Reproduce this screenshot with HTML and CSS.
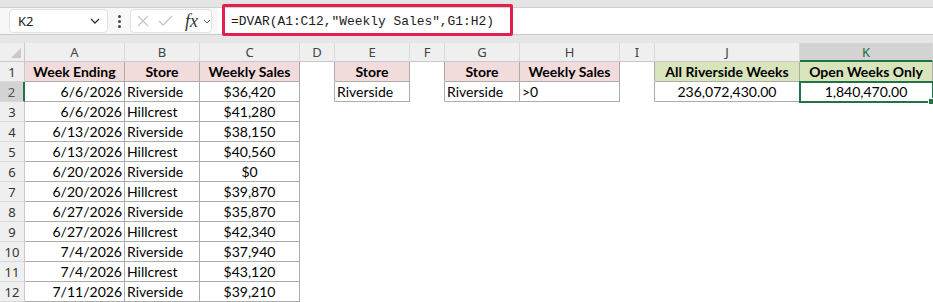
FILE: index.html
```html
<!DOCTYPE html>
<html>
<head>
  <meta charset="UTF-8">
  <title>DVAR</title>
  <link rel="stylesheet" href="styles.css">
</head>
<body>
  <div class="ribbon-edge"></div>
  <div class="toolbar">
    <div class="namebox">
      <span>K2</span>
      <svg class="chev" width="10" height="6" viewBox="0 0 10 6"><polyline points="1,1 5,5 9,1" fill="none" stroke="#333" stroke-width="1.3"/></svg>
    </div>
    <div class="dots"><i></i><i></i><i></i></div>
    <div class="fxbox">
      <svg width="12" height="12" viewBox="0 0 12 12"><path d="M1 1 L11 11 M11 1 L1 11" stroke="#c4c4c4" stroke-width="1.3"/></svg>
      <svg width="15" height="12" viewBox="0 0 15 12"><polyline points="1,6 5,10 14,1" fill="none" stroke="#c4c4c4" stroke-width="1.3"/></svg>
      <span class="fx">fx</span>
      <svg width="8" height="5" viewBox="0 0 8 5"><polyline points="1,1 4,4 7,1" fill="none" stroke="#666" stroke-width="1"/></svg>
    </div>
    <div class="formula">=DVAR(A1:C12,"Weekly Sales",G1:H2)</div>
    <div class="mark"></div>
  </div>
  <div class="gap"></div>

  <div class="sheet">
    <!-- column headers -->
    <div class="corner"><svg width="10" height="10" viewBox="0 0 10 10"><polygon points="10,0 10,10 0,10" fill="#c8c8c8"/></svg></div>
    <div class="ch">A</div><div class="ch">B</div><div class="ch">C</div><div class="ch">D</div>
    <div class="ch">E</div><div class="ch">F</div><div class="ch">G</div><div class="ch">H</div>
    <div class="ch">I</div><div class="ch">J</div><div class="ch on">K</div>

    <!-- 1 -->
    <div class="rh">1</div>
    <div class="c b hd">Week Ending</div><div class="c b hd">Store</div><div class="c b hd">Weekly Sales</div>
    <div class="c edge"></div><div class="c b hd">Store</div><div class="c edge"></div>
    <div class="c b hd">Store</div><div class="c b hd">Weekly Sales</div><div class="c edge"></div>
    <div class="c b hd green">All Riverside Weeks</div><div class="c b hd green">Open Weeks Only</div>

    <!-- 2 -->
    <div class="rh on">2</div>
    <div class="c b r">6/6/2026</div><div class="c b">Riverside</div><div class="c b m">$36,420</div>
    <div class="c edge"></div><div class="c b">Riverside</div><div class="c edge"></div>
    <div class="c b">Riverside</div><div class="c b">&gt;0</div><div class="c edge"></div>
    <div class="c b m">236,072,430.00</div><div class="c b m sel">1,840,470.00</div>

    <div class="rh">3</div>
    <div class="c b r">6/6/2026</div><div class="c b">Hillcrest</div><div class="c b m">$41,280</div>
    <div class="c"></div><div class="c"></div><div class="c"></div><div class="c"></div><div class="c"></div><div class="c"></div><div class="c"></div><div class="c"></div>

    <div class="rh">4</div>
    <div class="c b r">6/13/2026</div><div class="c b">Riverside</div><div class="c b m">$38,150</div>
    <div class="c"></div><div class="c"></div><div class="c"></div><div class="c"></div><div class="c"></div><div class="c"></div><div class="c"></div><div class="c"></div>

    <div class="rh">5</div>
    <div class="c b r">6/13/2026</div><div class="c b">Hillcrest</div><div class="c b m">$40,560</div>
    <div class="c"></div><div class="c"></div><div class="c"></div><div class="c"></div><div class="c"></div><div class="c"></div><div class="c"></div><div class="c"></div>

    <div class="rh">6</div>
    <div class="c b r">6/20/2026</div><div class="c b">Riverside</div><div class="c b m">$0</div>
    <div class="c"></div><div class="c"></div><div class="c"></div><div class="c"></div><div class="c"></div><div class="c"></div><div class="c"></div><div class="c"></div>

    <div class="rh">7</div>
    <div class="c b r">6/20/2026</div><div class="c b">Hillcrest</div><div class="c b m">$39,870</div>
    <div class="c"></div><div class="c"></div><div class="c"></div><div class="c"></div><div class="c"></div><div class="c"></div><div class="c"></div><div class="c"></div>

    <div class="rh">8</div>
    <div class="c b r">6/27/2026</div><div class="c b">Riverside</div><div class="c b m">$35,870</div>
    <div class="c"></div><div class="c"></div><div class="c"></div><div class="c"></div><div class="c"></div><div class="c"></div><div class="c"></div><div class="c"></div>

    <div class="rh">9</div>
    <div class="c b r">6/27/2026</div><div class="c b">Hillcrest</div><div class="c b m">$42,340</div>
    <div class="c"></div><div class="c"></div><div class="c"></div><div class="c"></div><div class="c"></div><div class="c"></div><div class="c"></div><div class="c"></div>

    <div class="rh">10</div>
    <div class="c b r">7/4/2026</div><div class="c b">Riverside</div><div class="c b m">$37,940</div>
    <div class="c"></div><div class="c"></div><div class="c"></div><div class="c"></div><div class="c"></div><div class="c"></div><div class="c"></div><div class="c"></div>

    <div class="rh">11</div>
    <div class="c b r">7/4/2026</div><div class="c b">Hillcrest</div><div class="c b m">$43,120</div>
    <div class="c"></div><div class="c"></div><div class="c"></div><div class="c"></div><div class="c"></div><div class="c"></div><div class="c"></div><div class="c"></div>

    <div class="rh">12</div>
    <div class="c b r">7/11/2026</div><div class="c b">Riverside</div><div class="c b m">$39,210</div>
    <div class="c"></div><div class="c"></div><div class="c"></div><div class="c"></div><div class="c"></div><div class="c"></div><div class="c"></div><div class="c"></div>
  </div>
</body>
</html>
```

FILE: styles.css
```css
body {
  margin: 0;
  padding: 0;
  width: 933px;
  height: 302px;
  overflow: hidden;
  background: #fff;
  font-family: 'Lato', 'Noto Sans', sans-serif;
}

.ribbon-edge {
  height: 8px;
  background: #e4e4e4;
  border-bottom: 1px solid #d0d0d0;
  box-sizing: border-box;
}

.toolbar {
  position: relative;
  height: 26px;
  display: flex;
  align-items: center;
  background: #f7f7f7;
  border-bottom: 1px solid #c8c8c8;
}

.namebox {
  margin-left: 9px;
  width: 99px;
  height: 24px;
  box-sizing: border-box;
  border: 1px solid #e2e2e2;
  border-radius: 4px;
  background: #fff;
  display: flex;
  align-items: center;
  justify-content: space-between;
  padding: 0 7px 0 8px;
  font-family: 'Noto Sans', sans-serif;
  font-size: 13px;
  color: #222;
}

.dots {
  width: 22px;
  display: flex;
  flex-direction: column;
  align-items: center;
  gap: 2px;
}

.dots i {
  width: 3px;
  height: 3px;
  background: #444;
  border-radius: 50%;
}

.fxbox {
  width: 82px;
  height: 24px;
  box-sizing: border-box;
  border: 1px solid #e2e2e2;
  border-radius: 4px;
  background: #fff;
  display: flex;
  align-items: center;
  gap: 9px;
  padding-left: 6px;
}

.fxbox .fx {
  font-family: 'Liberation Serif', serif;
  font-style: italic;
  font-size: 18px;
  color: #333;
  margin-left: 3px;
  margin-right: -4px;
}

.formula {
  flex-grow: 1;
  margin-left: 5px;
  height: 26px;
  background: #fff;
  display: flex;
  align-items: center;
  padding-left: 14px;
  padding-top: 1px;
  box-sizing: border-box;
  font-family: 'Liberation Mono', monospace;
  font-size: 12.9px;
  color: #1b1b1b;
}

/* red annotation box around the formula */
.mark {
  position: absolute;
  left: 222px;
  top: -4px;
  width: 291px;
  height: 32px;
  box-sizing: border-box;
  border: 3px solid #e2204f;
  border-radius: 2px;
}

.gap {
  height: 8px;
  background: #e6e6e6;
}

.sheet {
  display: grid;
  grid-template-columns: 25px 100px 75px 100px 35px 75px 35px 75px 100px 35px 145px 133px;
  grid-template-rows: 19px repeat(12, 20px);
  font-size: 14px;
  color: #000;
}

.sheet > div {
  box-sizing: border-box;
  border-right: 1px solid transparent;
  border-bottom: 1px solid transparent;
  display: flex;
  align-items: center;
  white-space: nowrap;
  overflow: hidden;
}

.corner {
  background: #efefef;
  border-right-color: #c9c9c9 !important;
  border-bottom-color: #c9c9c9 !important;
  align-items: flex-end !important;
  justify-content: flex-end;
  padding: 0 3px 3px 0;
}

.ch {
  justify-content: center;
  background: #efefef;
  border-right-color: #d8d8d8 !important;
  border-bottom-color: #c9c9c9 !important;
  font-family: 'Noto Sans', sans-serif;
  font-size: 13px;
  color: #444;
}

.ch.on {
  background: #d3d3d3;
  color: #1d6b3f;
  border-bottom: 2px solid #217346 !important;
}

.rh {
  justify-content: center;
  background: #efefef;
  border-right-color: #c9c9c9 !important;
  border-bottom-color: #d8d8d8 !important;
  font-family: 'Noto Sans', sans-serif;
  font-size: 13px;
  color: #333;
}

.rh.on {
  background: #d3d3d3;
  color: #555;
  border-right: 2px solid #217346 !important;
}

.c {
  padding: 0 2px;
}

.c.b {
  border-right-color: #ababab;
  border-bottom-color: #ababab;
}

.c.edge {
  border-right-color: #ababab;
}

.c.r { justify-content: flex-end; }
.c.m { justify-content: center; }

.c.hd {
  justify-content: center;
  font-weight: bold;
  background: #f2dcdb;
}

.c.hd.green {
  background: #d8e4bc;
}

.c.sel {
  position: relative;
  overflow: visible;
  outline: 2px solid #217346;
  outline-offset: -1px;
}

.c.sel::after {
  content: '';
  position: absolute;
  right: -3px;
  bottom: -4px;
  width: 5px;
  height: 5px;
  background: #217346;
  border: 1px solid #fff;
}
```
